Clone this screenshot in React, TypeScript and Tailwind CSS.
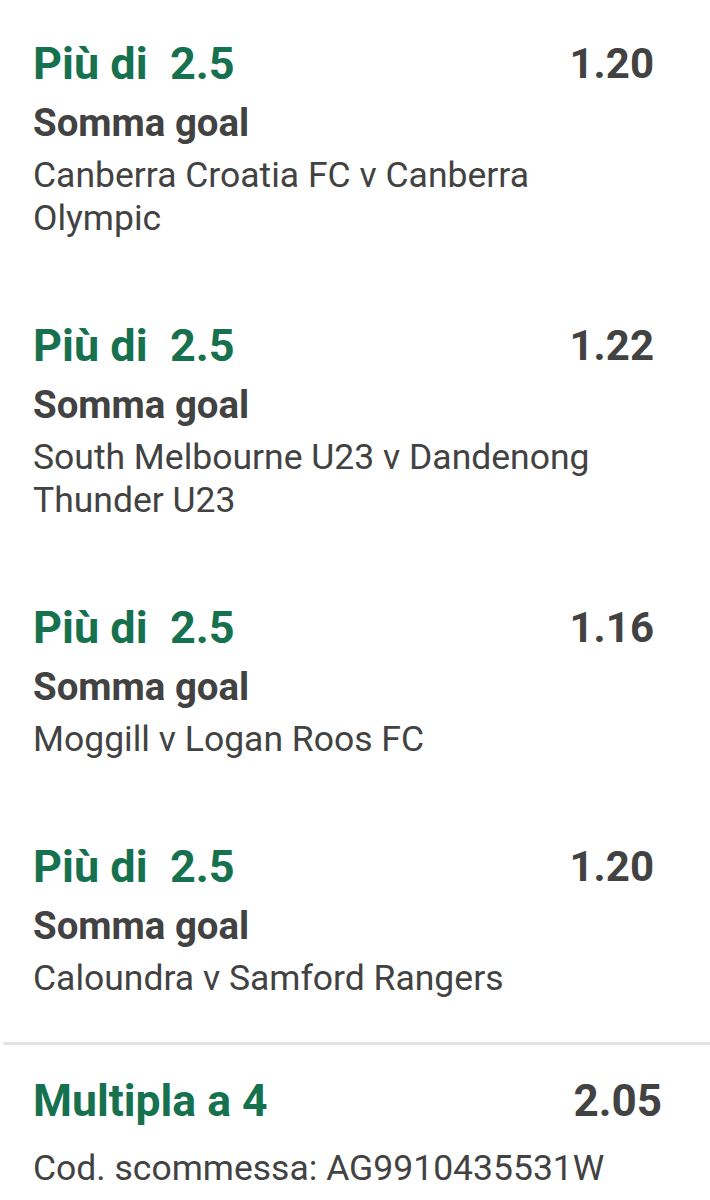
import React from "react";

const bets = [
  { odd: "1.20", lines: ["Canberra Croatia FC v Canberra", "Olympic"] },
  { odd: "1.22", lines: ["South Melbourne U23 v Dandenong", "Thunder U23"] },
  { odd: "1.16", lines: ["Moggill v Logan Roos FC"] },
  { odd: "1.20", lines: ["Caloundra v Samford Rangers"] },
];

export default function App() {
  return (
    <div className="w-[710px] h-[1200px] bg-white overflow-hidden text-[#424242]" style={{ fontFamily: "Roboto, 'Noto Sans', sans-serif" }}>
      <div className="pl-[33px] pr-[56px] pt-[38px]">
        {bets.map((b, i) => (
          <div key={i} className={i < bets.length - 1 ? "pb-[80px]" : "pb-[42px]"}>
            <div className="flex justify-between items-start">
              <div className="text-[45px] leading-[52px] font-bold text-[#16714f] whitespace-pre">Più di  2.5</div>
              <div className="text-[42px] leading-[52px] font-bold text-[#424242]">{b.odd}</div>
            </div>
            <div className="mt-[11px] text-[38.4px] leading-[44px] font-bold">Somma goal</div>
            <div className="mt-[9px] text-[35.5px] leading-[43px]">
              {b.lines.map((l, j) => (
                <div key={j}>{l}</div>
              ))}
            </div>
          </div>
        ))}
      </div>
      <div className="ml-[3px] h-[3px] bg-[#e3e3e3] rounded-l-full" />
      <div className="pl-[33px] pr-[48px] pt-[30px]">
        <div className="flex justify-between items-start">
          <div className="text-[44.5px] leading-[52px] font-bold text-[#16714f]">Multipla a 4</div>
          <div className="text-[44px] leading-[52px] font-bold text-[#424242]">2.05</div>
        </div>
        <div className="mt-[21px] text-[35.5px] leading-[40px] whitespace-nowrap">Cod. scommessa: AG9910435531W</div>
      </div>
    </div>
  );
}
